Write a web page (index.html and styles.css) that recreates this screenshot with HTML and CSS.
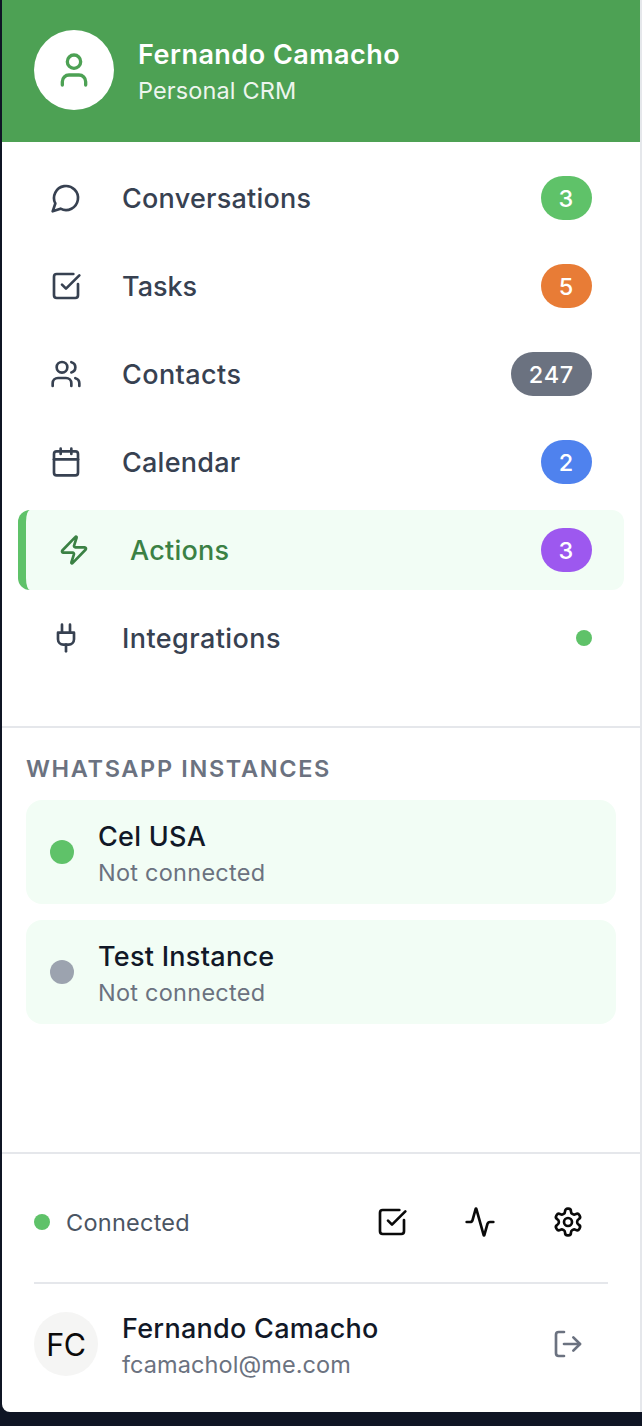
FILE: index.html
```html
<!DOCTYPE html>
<html lang="en">
<head>
<meta charset="utf-8">
<title>Personal CRM</title>
<link rel="stylesheet" href="styles.css">
</head>
<body>
<aside class="sidebar">
  <header class="header">
    <div class="logo">
      <svg class="icon icon-lg" viewBox="0 0 24 24"><path d="M19 21v-2a4 4 0 0 0-4-4H9a4 4 0 0 0-4 4v2"/><circle cx="12" cy="7" r="4"/></svg>
    </div>
    <div class="text">
      <div class="title">Fernando Camacho</div>
      <div class="subtitle">Personal CRM</div>
    </div>
  </header>

  <nav class="nav">
    <a class="item">
      <svg class="icon" viewBox="0 0 24 24"><path d="M7.9 20A9 9 0 1 0 4 16.1L2 22Z"/></svg>
      <span class="label">Conversations</span><span class="badge green">3</span>
    </a>
    <a class="item">
      <svg class="icon" viewBox="0 0 24 24"><path d="M21 10.5V19a2 2 0 0 1-2 2H5a2 2 0 0 1-2-2V5a2 2 0 0 1 2-2h12.5"/><path d="m9 11 3 3L22 4"/></svg>
      <span class="label track-none">Tasks</span><span class="badge orange">5</span>
    </a>
    <a class="item">
      <svg class="icon" viewBox="0 0 24 24"><path d="M16 21v-2a4 4 0 0 0-4-4H6a4 4 0 0 0-4 4v2"/><circle cx="9" cy="7" r="4"/><path d="M22 21v-2a4 4 0 0 0-3-3.87"/><path d="M16 3.13a4 4 0 0 1 0 7.75"/></svg>
      <span class="label track-wide">Contacts</span><span class="badge gray">247</span>
    </a>
    <a class="item">
      <svg class="icon" viewBox="0 0 24 24"><path d="M8 2v4"/><path d="M16 2v4"/><rect width="18" height="18" x="3" y="4" rx="2"/><path d="M3 10h18"/></svg>
      <span class="label">Calendar</span><span class="badge blue">2</span>
    </a>
    <a class="item active">
      <svg class="icon" viewBox="0 0 24 24"><path d="M4 14a1 1 0 0 1-.78-1.63l9.9-10.2a.5.5 0 0 1 .86.46l-1.92 6.02A1 1 0 0 0 13 10h7a1 1 0 0 1 .78 1.63l-9.9 10.2a.5.5 0 0 1-.86-.46l1.92-6.02A1 1 0 0 0 11 14z"/></svg>
      <span class="label">Actions</span><span class="badge purple">3</span>
    </a>
    <a class="item">
      <svg class="icon" viewBox="0 0 24 24"><path d="M12 22v-5"/><path d="M9 8V2"/><path d="M15 8V2"/><path d="M18 8v5a4 4 0 0 1-4 4h-4a4 4 0 0 1-4-4V8Z"/></svg>
      <span class="label track-wide">Integrations</span><span class="dot"></span>
    </a>
  </nav>

  <section class="instances">
    <h2 class="heading">WHATSAPP INSTANCES</h2>
    <div class="card">
      <span class="dot dot-lg"></span>
      <div class="text"><div class="name">Cel USA</div><div class="meta">Not connected</div></div>
    </div>
    <div class="card">
      <span class="dot dot-lg dot-off"></span>
      <div class="text"><div class="name">Test Instance</div><div class="meta">Not connected</div></div>
    </div>
  </section>

  <footer class="footer">
    <div class="status">
      <span class="dot"></span>
      <span class="status-text">Connected</span>
      <button class="btn"><svg class="icon" viewBox="0 0 24 24"><path d="M21 10.5V19a2 2 0 0 1-2 2H5a2 2 0 0 1-2-2V5a2 2 0 0 1 2-2h12.5"/><path d="m9 11 3 3L22 4"/></svg></button>
      <button class="btn"><svg class="icon" viewBox="0 0 24 24"><path d="M22 12h-2.48a2 2 0 0 0-1.93 1.46l-2.35 8.36a.25.25 0 0 1-.48 0L9.24 2.18a.25.25 0 0 0-.48 0l-2.35 8.36A2 2 0 0 1 4.49 12H2"/></svg></button>
      <button class="btn"><svg class="icon" viewBox="0 0 24 24"><path d="M12.22 2h-.44a2 2 0 0 0-2 2v.18a2 2 0 0 1-1 1.73l-.43.25a2 2 0 0 1-2 0l-.15-.08a2 2 0 0 0-2.73.73l-.22.38a2 2 0 0 0 .73 2.73l.15.1a2 2 0 0 1 1 1.72v.51a2 2 0 0 1-1 1.74l-.15.09a2 2 0 0 0-.73 2.73l.22.38a2 2 0 0 0 2.73.73l.15-.08a2 2 0 0 1 2 0l.43.25a2 2 0 0 1 1 1.73V20a2 2 0 0 0 2 2h.44a2 2 0 0 0 2-2v-.18a2 2 0 0 1 1-1.73l.43-.25a2 2 0 0 1 2 0l.15.08a2 2 0 0 0 2.73-.73l.22-.39a2 2 0 0 0-.73-2.73l-.15-.08a2 2 0 0 1-1-1.74v-.5a2 2 0 0 1 1-1.74l.15-.09a2 2 0 0 0 .73-2.73l-.22-.38a2 2 0 0 0-2.73-.73l-.15.08a2 2 0 0 1-2 0l-.43-.25a2 2 0 0 1-1-1.73V4a2 2 0 0 0-2-2z"/><circle cx="12" cy="12" r="3"/></svg></button>
    </div>
    <div class="user">
      <div class="avatar">FC</div>
      <div class="text user-text"><div class="name">Fernando Camacho</div><div class="meta email">fcamachol@me.com</div></div>
      <button class="btn btn-muted"><svg class="icon" viewBox="0 0 24 24"><path d="M9 21H5a2 2 0 0 1-2-2V5a2 2 0 0 1 2-2h4"/><path d="m16 17 5-5-5-5"/><path d="M21 12H9"/></svg></button>
    </div>
  </footer>
</aside>
</body>
</html>
```
FILE: styles.css
```css
* { box-sizing: border-box; }

body {
  margin: 0;
  padding-left: 2px;
  height: 1426px;
  background: #0f1524;
  font-family: Inter, "Liberation Sans", sans-serif;
  overflow: hidden;
}

.sidebar {
  display: flex;
  flex-direction: column;
  height: 1412px;
  background: #fff;
  border-right: 2px solid #e5e7eb;
  border-bottom-left-radius: 8px;
}

.icon {
  display: block;
  flex: none;
  width: 32px;
  height: 32px;
  fill: none;
  stroke: currentColor;
  stroke-width: 2;
  stroke-linecap: round;
  stroke-linejoin: round;
}
.icon-lg { width: 40px; height: 40px; }

.text { padding-top: 2px; }

.header {
  display: flex;
  align-items: center;
  gap: 24px;
  height: 142px;
  padding: 0 32px 2px;
  background: #4da154;
  color: #fff;
}
.logo {
  display: grid;
  place-items: center;
  width: 80px;
  height: 80px;
  border-radius: 50%;
  background: #fff;
  color: #4da154;
}
.title { font-size: 27px; font-weight: 600; line-height: 40px; letter-spacing: .48px; }
.subtitle { font-size: 23.5px; line-height: 32px; letter-spacing: .12px; opacity: .9; }

.nav {
  display: flex;
  flex-direction: column;
  gap: 8px;
  height: 586px;
  padding: 16px;
  border-bottom: 2px solid #e5e7eb;
}
.item {
  display: flex;
  align-items: center;
  height: 80px;
  padding: 0 32px;
  border-radius: 12px;
  color: #374151;
}
.label {
  flex: 1;
  margin-left: 40px;
  padding-top: 2px;
  font-size: 27px;
  font-weight: 500;
  line-height: 40px;
  letter-spacing: .24px;
}
.track-none { letter-spacing: 0; }
.track-wide { letter-spacing: .42px; }
.active {
  border-left: 8px solid #5fc269;
  background: #f2fdf5;
  color: #3b8144;
}
.badge {
  height: 44px;
  padding: 0 18px;
  border-radius: 22px;
  color: #fff;
  font-size: 23.5px;
  font-weight: 500;
  line-height: 45px;
  letter-spacing: .75px;
}
.green { background: #5fc269; }
.orange { background: #e87c36; }
.gray { background: #6b7280; }
.blue { background: #4f82ee; }
.purple { background: #9d58ef; }

.dot {
  flex: none;
  width: 16px;
  height: 16px;
  border-radius: 50%;
  background: #5fc269;
}
.dot-lg { width: 24px; height: 24px; }
.dot-off { background: #9ca3af; }

.instances {
  display: flex;
  flex: 1;
  flex-direction: column;
  gap: 16px;
  padding: 25px 24px 24px;
}
.heading {
  margin: 0 0 -1px;
  color: #6b7280;
  font-size: 23.5px;
  font-weight: 600;
  line-height: 32px;
  letter-spacing: 1.65px;
}
.card {
  display: flex;
  align-items: center;
  gap: 24px;
  height: 104px;
  padding: 0 24px;
  border-radius: 16px;
  background: #f2fdf5;
}
.name { color: #111827; font-size: 27px; font-weight: 500; line-height: 40px; letter-spacing: .28px; }
.meta { color: #6b7280; font-size: 23.5px; line-height: 32px; letter-spacing: .25px; }
.email { letter-spacing: .08px; }

.footer {
  height: 260px;
  padding: 32px;
  border-top: 2px solid #e5e7eb;
}
.status {
  display: flex;
  align-items: center;
  height: 98px;
  padding-bottom: 24px;
  border-bottom: 2px solid #e5e7eb;
}
.status-text {
  flex: 1;
  margin-left: 16px;
  padding-top: 2px;
  color: #4b5563;
  font-size: 23.5px;
  line-height: 32px;
  letter-spacing: .25px;
}
.btn {
  display: grid;
  place-items: center;
  width: 80px;
  height: 72px;
  padding: 0;
  border: 0;
  background: none;
  color: #0a0a0a;
}
.btn + .btn { margin-left: 8px; }
.btn-muted { color: #6b7280; }
.user {
  display: flex;
  align-items: center;
  height: 72px;
  margin-top: 24px;
}
.avatar {
  display: grid;
  place-items: center;
  width: 64px;
  height: 64px;
  border-radius: 50%;
  background: #f5f5f4;
  color: #0c0a09;
  font-size: 30.5px;
  letter-spacing: -.4px;
}
.user-text { flex: 1; margin-left: 24px; }
```
